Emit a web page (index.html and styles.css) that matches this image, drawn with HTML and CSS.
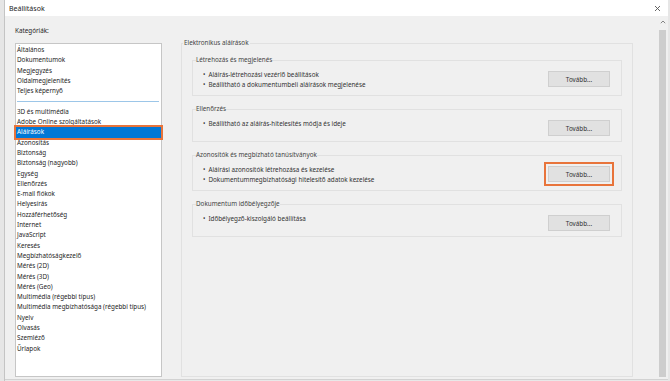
FILE: index.html
```html
<!DOCTYPE html>
<html>
<head>
  <meta charset="utf-8">
  <meta name="viewport" content="width=device-width, initial-scale=1.0">
  <title>Beállítások</title>
  <link rel="stylesheet" href="styles.css">
</head>
<body>
  <div class="edge"></div>

  <div class="window">
    <div class="titlebar">
      <span class="title">Beállítások</span>
      <svg class="close" width="7" height="7" viewBox="0 0 7 7">
        <path d="M1 1 L6 6 M6 1 L1 6" stroke="#555" stroke-width="0.9" fill="none"/>
      </svg>
    </div>

    <div class="content">
      <div class="categories">
        <p class="label">Kategóriák:</p>
        <ul class="list">
          <li>Általános</li>
          <li>Dokumentumok</li>
          <li>Megjegyzés</li>
          <li>Oldalmegjelenítés</li>
          <li>Teljes képernyő</li>
          <li class="divider"><hr></li>
          <li>3D és multimédia</li>
          <li>Adobe Online szolgáltatások</li>
          <li class="selected">Aláírások</li>
          <li>Azonosítás</li>
          <li>Biztonság</li>
          <li>Biztonság (nagyobb)</li>
          <li>Egység</li>
          <li>Ellenőrzés</li>
          <li>E-mail fiókok</li>
          <li>Helyesírás</li>
          <li>Hozzáférhetőség</li>
          <li>Internet</li>
          <li>JavaScript</li>
          <li>Keresés</li>
          <li>Megbízhatóságkezelő</li>
          <li>Mérés (2D)</li>
          <li>Mérés (3D)</li>
          <li>Mérés (Geo)</li>
          <li>Multimédia (régebbi típus)</li>
          <li>Multimédia megbízhatósága (régebbi típus)</li>
          <li>Nyelv</li>
          <li>Olvasás</li>
          <li>Szemléző</li>
          <li>Űrlapok</li>
        </ul>
      </div>

      <fieldset class="group">
        <legend>Elektronikus aláírások</legend>

        <fieldset class="section">
          <legend>Létrehozás és megjelenés</legend>
          <div class="row">
            <ul class="bullets">
              <li>Aláírás-létrehozási vezérlő beállítások</li>
              <li>Beállítható a dokumentumbeli aláírások megjelenése</li>
            </ul>
            <button>Tovább...</button>
          </div>
        </fieldset>

        <fieldset class="section">
          <legend>Ellenőrzés</legend>
          <div class="row">
            <ul class="bullets">
              <li>Beállítható az aláírás-hitelesítés módja és ideje</li>
            </ul>
            <button>Tovább...</button>
          </div>
        </fieldset>

        <fieldset class="section">
          <legend>Azonosítók és megbízható tanúsítványok</legend>
          <div class="row">
            <ul class="bullets">
              <li>Aláírási azonosítók létrehozása és kezelése</li>
              <li>Dokumentummegbízhatósági hitelesítő adatok kezelése</li>
            </ul>
            <button class="marked">Tovább...</button>
          </div>
        </fieldset>

        <fieldset class="section">
          <legend>Dokumentum időbélyegzője</legend>
          <div class="row">
            <ul class="bullets">
              <li>Időbélyegző-kiszolgáló beállítása</li>
            </ul>
            <button>Tovább...</button>
          </div>
        </fieldset>
      </fieldset>

      <div class="spacer"></div>

      <div class="scrollbar">
        <svg class="arrow" width="6" height="4" viewBox="0 0 6 4">
          <path d="M0.8 3.2 L3 1 L5.2 3.2" stroke="#777" stroke-width="0.9" fill="none"/>
        </svg>
        <div class="thumb"></div>
      </div>
    </div>
  </div>

  <div class="edge right"></div>
</body>
</html>
```

FILE: styles.css
```css
html, body {
  margin: 0;
  padding: 0;
}
body {
  display: flex;
  width: 670px;
  height: 381px;
  overflow: hidden;
  background-color: #e8e8e8;
  font-family: "Noto Sans", "Open Sans", sans-serif;
  font-size: 6.3px;
  color: #1e1e1e;
}
.edge {
  width: 4px;
  border-right: 1px solid #c4c4c4;
  background-color: #e6e6e6;
}
.edge.right {
  width: 2px;
  border-right: 0;
}
.window {
  flex: 1;
  display: flex;
  flex-direction: column;
}
.titlebar {
  height: 16px;
  display: flex;
  align-items: center;
  justify-content: space-between;
  padding: 0 7px 0 4px;
  background-color: #ffffff;
}
.title {
  font-size: 7px;
  color: #222222;
}
.content {
  height: 363px;
  display: flex;
  padding-left: 10px;
  background-color: #f0f0f0;
  border-bottom: 1px solid #d2d2d2;
}
.categories {
  width: 147px;
  display: flex;
  flex-direction: column;
}
.label {
  margin: 10px 0 7px;
  line-height: 10px;
}
.list {
  flex: 1;
  margin: 0 0 2px;
  padding: 1px 0 0;
  list-style: none;
  background-color: #ffffff;
  border: 1px solid #c6c6c6;
}
.list li {
  height: 10.3px;
  line-height: 10.3px;
  padding-left: 1px;
  white-space: nowrap;
}
.list li.selected {
  background-color: #0078d7;
  color: #ffffff;
  outline: 2px solid #e8743b;
}
.list li.divider {
  display: flex;
  align-items: center;
  padding: 0 2px 0 1px;
}
.list hr {
  flex: 1;
  margin: 0;
  border: 0;
  border-top: 1px solid #9cc6e8;
}
fieldset {
  margin: 0;
  min-width: 0;
  border: 1px solid #e1e1e1;
}
legend {
  padding: 0;
  line-height: 10px;
  color: #444444;
}
.group {
  width: 430px;
  margin: 22px 0 2px 19px;
  padding: 7px 10px 0;
}
.group > legend {
  margin-left: -9px;
  padding: 0 1px;
}
.section {
  margin-bottom: 8px;
  padding: 5px 11px 5px 10px;
}
.section > legend {
  margin-left: -7px;
}
.row {
  display: flex;
  justify-content: space-between;
  align-items: flex-start;
}
.bullets {
  margin: 0;
  padding: 0;
  list-style: none;
  color: #333333;
}
.bullets li {
  line-height: 10px;
  white-space: nowrap;
}
.bullets li::before {
  content: "•";
  margin-right: 3px;
}
button {
  width: 62px;
  height: 16px;
  margin-top: 1px;
  padding: 0;
  font-family: inherit;
  font-size: 6.3px;
  color: #333333;
  background-color: #e1e1e1;
  border: 1px solid #cfcfcf;
}
button.marked {
  outline: 2px solid #e8743b;
  outline-offset: 2px;
}
.spacer {
  flex: 1;
}
.scrollbar {
  width: 10px;
  margin-bottom: 2px;
  display: flex;
  flex-direction: column;
  align-items: center;
  background-color: #f0f0f0;
}
.arrow {
  margin: 4px 0 6px;
}
.thumb {
  flex: 1;
  width: 7px;
  margin-right: 2px;
  background-color: #cdcdcd;
}
```
